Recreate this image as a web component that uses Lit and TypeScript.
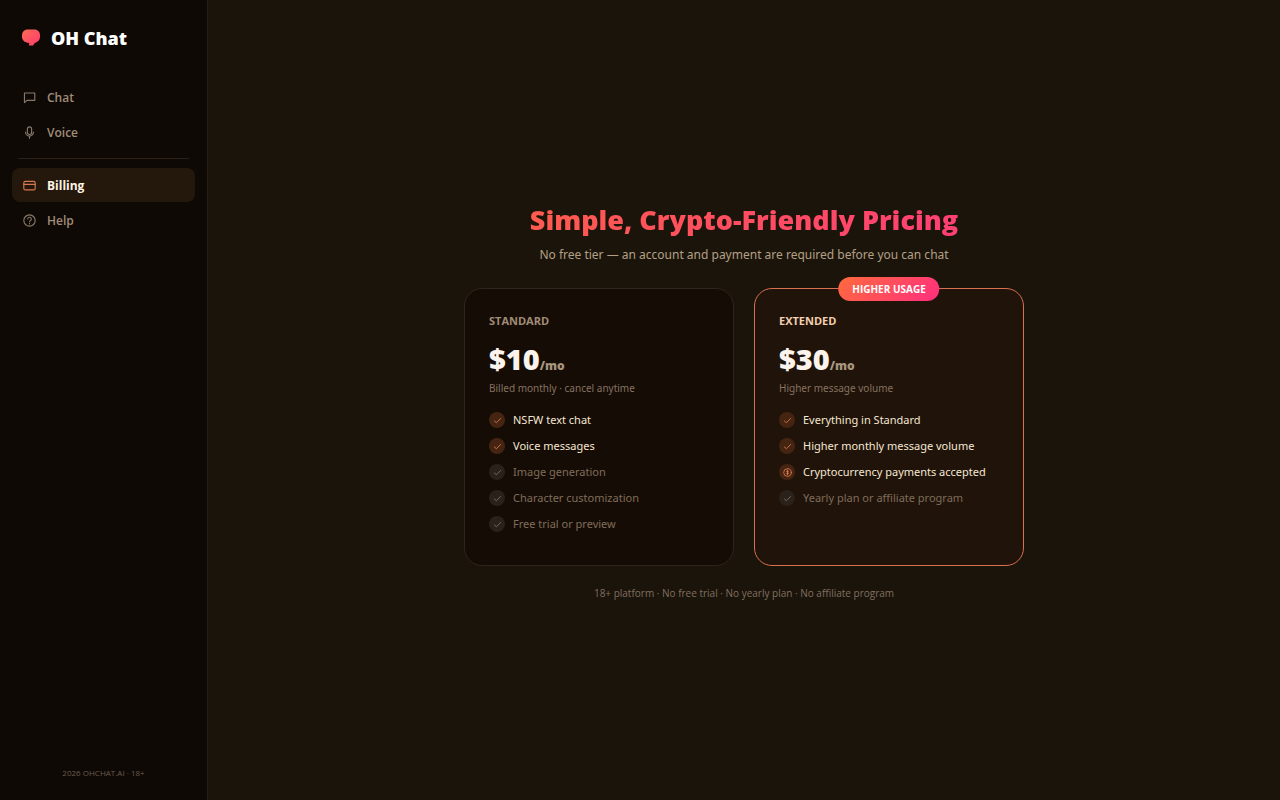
import { LitElement, html, css, svg, nothing } from "lit";
import { customElement, property } from "lit/decorators.js";
import { classMap } from "lit/directives/class-map.js";

interface Feature {
  text: string;
  off?: boolean;
  icon?: "check" | "coin";
}

const glyphs = {
  chat: svg`<path d="M14.500 2.500H1.800v11.800l3-2.800h9.700z"/>`,
  voice: svg`<rect x="5.4" y="1" width="5.200" height="9.400" rx="2.600"/><path d="M3.200 7.600a4.800 4.800 0 0 0 9.600 0M8 12.400V15.200"/>`,
  card: svg`<rect x="1" y="3" width="14" height="10.400" rx="1.800"/><path d="M1 6.600h14"/>`,
  help: svg`<circle cx="8" cy="8" r="7"/><path d="M5.800 6.200a2.200 2.200 0 1 1 3.200 2c-.7.4-1 .7-1 1.300M8 11.600v.6"/>`,
  check: svg`<path d="M2.500 8.800l3.600 3.200 7.400-7.600"/>`,
  coin: svg`<circle cx="8" cy="8" r="6.800"/><path d="M10 5.800C9.500 5 6.200 4.800 6.200 6.500S10 7.800 10 9.500 6.500 11 6 10.100M8 3.800v8.400"/>`,
};

@customElement("side-link")
class SideLink extends LitElement {
  @property() icon: "chat" | "voice" | "card" | "help" = "chat";
  @property() label = "";
  @property({ type: Boolean }) active = false;

  static styles = css`
    :host {
      display: block;
    }
    .link {
      display: flex;
      align-items: center;
      gap: 11px;
      height: 34px;
      padding: 0 11px;
      border-radius: 8px;
      color: #a18c78;
      font-size: 12px;
      font-weight: 600;
      text-decoration: none;
    }
    .active {
      background: #24170b;
      color: #fff3e3;
      font-weight: 700;
    }
    .icon {
      width: 13px;
      height: 13px;
      fill: none;
      stroke: #87786a;
      stroke-width: 1.4;
      stroke-linecap: round;
      stroke-linejoin: round;
    }
    .active .icon {
      stroke: #d9784f;
    }
  `;

  render() {
    return html`<a
      class=${classMap({ link: true, active: this.active })}
      href="#${this.label.toLowerCase()}"
      aria-current=${this.active ? "page" : nothing}
      ><svg class="icon" viewBox="0 0 16 16" aria-hidden="true">${glyphs[this.icon]}</svg
      ><span>${this.label}</span></a
    >`;
  }
}

@customElement("plan-card")
class PlanCard extends LitElement {
  @property() name = "";
  @property() price = "";
  @property() note = "";
  @property() badge = "";
  @property({ attribute: false }) features: Feature[] = [];

  static styles = css`
    :host {
      display: grid;
    }
    .card {
      position: relative;
      padding: 24px 24px 32px;
      border: 1px solid #30251a;
      border-radius: 18px;
      background: #150c06;
    }
    .featured {
      border-color: #d9704f;
      background: #1f130a;
    }
    .badge {
      position: absolute;
      top: -12px;
      left: 50%;
      transform: translateX(-50%);
      padding: 0 14px;
      border-radius: 12px;
      background: linear-gradient(135deg, #ff6b3d, #ff2e7e);
      color: #fff;
      font-size: 10px;
      font-weight: 700;
      line-height: 24px;
      white-space: nowrap;
    }
    .name {
      margin: 0;
      color: #a08c77;
      font-size: 11px;
      font-weight: 700;
      line-height: 16px;
    }
    .featured .name {
      color: #f5cfae;
    }
    .price {
      margin: 10px 0 0;
      color: #fbf3ec;
      font-size: 29px;
      font-weight: 800;
      line-height: 40px;
    }
    .per {
      color: #a8967f;
      font-size: 12px;
      line-height: 1;
    }
    .note {
      margin: 0;
      color: #86725f;
      font-family: "Noto Sans", sans-serif;
      font-size: 10px;
      line-height: 18px;
    }
    .list {
      display: grid;
      gap: 8px;
      margin: 14px 0 0;
      padding: 0;
      list-style: none;
    }
    .item {
      display: flex;
      align-items: center;
      gap: 8px;
      color: #f6e7d2;
      font-family: "Noto Sans", sans-serif;
      font-size: 11px;
      line-height: 18px;
    }
    .off {
      color: #806c59;
    }
    .dot {
      display: grid;
      flex: none;
      place-items: center;
      width: 16px;
      height: 16px;
      border-radius: 50%;
      background: #452412;
    }
    .off .dot {
      background: #29211a;
    }
    .mark {
      width: 9px;
      height: 9px;
      fill: none;
      stroke: #d9784f;
      stroke-width: 1.6;
      stroke-linecap: round;
      stroke-linejoin: round;
    }
    .off .mark {
      stroke: #7d7064;
    }
  `;

  render() {
    return html`<article class=${classMap({ card: true, featured: !!this.badge })}>
      ${this.badge ? html`<span class="badge">${this.badge}</span>` : nothing}
      <h2 class="name">${this.name}</h2>
      <p class="price">${this.price}<span class="per">/mo</span></p>
      <p class="note">${this.note}</p>
      <ul class="list">
        ${this.features.map(
          (f) => html`<li class=${classMap({ item: true, off: !!f.off })}>
            <span class="dot"
              ><svg class="mark" viewBox="0 0 16 16" aria-hidden="true">${glyphs[f.icon ?? "check"]}</svg></span
            ><span>${f.text}</span>
          </li>`
        )}
      </ul>
    </article>`;
  }
}

@customElement("app-root")
class AppRoot extends LitElement {
  static styles = css`
    :host {
      display: grid;
      grid-template-columns: 208px 1fr;
      min-height: 100vh;
      background: #1b140b;
      color: #f6e7d2;
      font-family: "Open Sans", "Noto Sans", sans-serif;
    }
    .side {
      display: flex;
      flex-direction: column;
      box-sizing: border-box;
      padding: 24px 12px 19px;
      border-right: 1px solid #2a1d12;
      background: #0e0905;
    }
    .brand {
      display: flex;
      align-items: center;
      gap: 10px;
      height: 28px;
      padding: 0 9px;
      color: #fff;
      font-size: 18px;
      font-weight: 800;
    }
    .logo {
      width: 20px;
      height: 20px;
    }
    .nav {
      display: grid;
      gap: 1px;
      margin-top: 28px;
    }
    .rule {
      width: calc(100% - 12px);
      height: 1px;
      margin: 8px auto;
      border: 0;
      background: #2b2119;
    }
    .legal {
      margin: auto 0 0;
      color: #6b5b4d;
      font-size: 8px;
      line-height: 16px;
      text-align: center;
    }
    .main {
      display: flex;
      flex-direction: column;
      align-items: center;
      justify-content: center;
      padding: 26px 24px 24px;
    }
    .title {
      margin: 0;
      background: linear-gradient(135deg, #ff5c4e, #ff3f74);
      background-clip: text;
      -webkit-background-clip: text;
      color: transparent;
      font-size: 27px;
      font-weight: 800;
      line-height: 40px;
      text-align: center;
    }
    .sub {
      margin: 5px 0 0;
      color: #b3a084;
      font-family: "Noto Sans", sans-serif;
      font-size: 12px;
      line-height: 20px;
      text-align: center;
    }
    .plans {
      display: grid;
      grid-template-columns: 1fr 1fr;
      gap: 20px;
      width: 100%;
      max-width: 560px;
      margin-top: 23px;
    }
    .foot {
      margin: 18px 0 0;
      color: #80705f;
      font-size: 10px;
      line-height: 18px;
      text-align: center;
    }
  `;

  private standard: Feature[] = [
    { text: "NSFW text chat" },
    { text: "Voice messages" },
    { text: "Image generation", off: true },
    { text: "Character customization", off: true },
    { text: "Free trial or preview", off: true },
  ];

  private extended: Feature[] = [
    { text: "Everything in Standard" },
    { text: "Higher monthly message volume" },
    { text: "Cryptocurrency payments accepted", icon: "coin" },
    { text: "Yearly plan or affiliate program", off: true },
  ];

  render() {
    return html`
      <aside class="side">
        <div class="brand">
          <svg class="logo" viewBox="0 0 20 20" aria-hidden="true">
            <defs>
              <linearGradient id="flame" x1="0" y1="0" x2="1" y2="1">
                <stop offset="0" stop-color="#ff6b52" />
                <stop offset="1" stop-color="#ff3a70" />
              </linearGradient>
            </defs>
            <path
              fill="url(#flame)"
              d="M7 1.500H13C17 1.500 19 4 19 7.500V8.800C19 12 17 14.300 13.800 14.900C12.900 15.600 12.600 17.600 11.200 17.600H8.200C7.600 17.200 8.400 16 8.200 15C3.500 14.800 1 12 1 8.800V7.500C1 4 3 1.500 7 1.500z"
            />
          </svg>
          <span>OH Chat</span>
        </div>
        <nav class="nav">
          <side-link icon="chat" label="Chat"></side-link>
          <side-link icon="voice" label="Voice"></side-link>
          <hr class="rule" />
          <side-link icon="card" label="Billing" active></side-link>
          <side-link icon="help" label="Help"></side-link>
        </nav>
        <p class="legal">2026 OHCHAT.AI · 18+</p>
      </aside>
      <main class="main">
        <h1 class="title">Simple, Crypto-Friendly Pricing</h1>
        <p class="sub">No free tier — an account and payment are required before you can chat</p>
        <div class="plans">
          <plan-card
            name="STANDARD"
            price="$10"
            note="Billed monthly · cancel anytime"
            .features=${this.standard}
          ></plan-card>
          <plan-card
            name="EXTENDED"
            price="$30"
            note="Higher message volume"
            badge="HIGHER USAGE"
            .features=${this.extended}
          ></plan-card>
        </div>
        <p class="foot">18+ platform · No free trial · No yearly plan · No affiliate program</p>
      </main>
    `;
  }
}
